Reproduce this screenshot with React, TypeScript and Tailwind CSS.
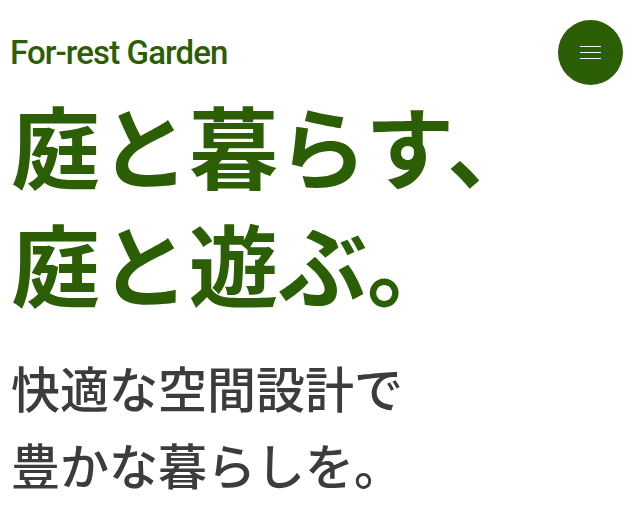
export default function App() {
  return (
    <div className="min-h-[513px] w-full bg-white font-['Noto_Sans_CJK_JP',sans-serif]">
      {/* Header */}
      <header className="flex items-center justify-between pl-[10px] pr-[10px] pt-[20px]">
        <a
          href="#"
          className="font-['Roboto',sans-serif] text-[33px] font-medium leading-none tracking-[-0.9px] text-[#2c5e05]"
        >
          For-rest Garden
        </a>
        <button
          type="button"
          aria-label="menu"
          className="flex h-[65px] w-[65px] flex-col items-center justify-center gap-[4.7px] rounded-full bg-[#2c5e05]"
        >
          <span className="block h-[1.3px] w-[21px] bg-white" />
          <span className="block h-[1.3px] w-[21px] bg-white" />
          <span className="block h-[1.3px] w-[21px] bg-white" />
        </button>
      </header>

      {/* Hero copy */}
      <main className="pl-[11px]">
        <h1 className="text-[89px] font-bold leading-[118px] text-[#2c5e05]">
          庭と暮らす、
          <br />
          庭と遊ぶ。
        </h1>
        <p className="mt-[27px] text-[49px] font-medium leading-[77px] text-[#3c3c3c]">
          快適な空間設計で
          <br />
          豊かな暮らしを。
        </p>
      </main>
    </div>
  );
}
